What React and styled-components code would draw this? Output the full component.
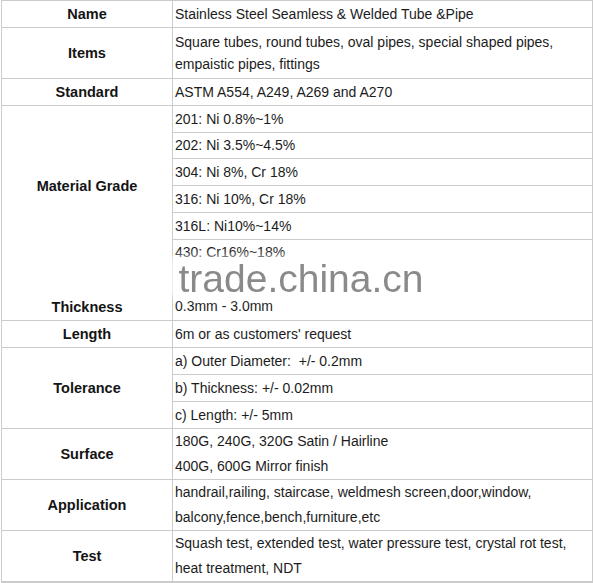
import React from "react";
import styled, { createGlobalStyle } from "styled-components";

const Global = createGlobalStyle`
  html, body { margin: 0; padding: 0; background: #ffffff; }
  body { font-family: "Liberation Sans", Arial, sans-serif; }
`;

const LINE = "#cbcbcb";

const Table = styled.div`
  position: relative;
  box-sizing: border-box;
  width: 592px;
  margin-left: 1px;
  border: 1px solid ${LINE};
  border-top: none;
  background: #fff;
`;

const Row = styled.div`
  display: flex;
  border-bottom: ${(p) => (p.$open ? "none" : `1px solid ${LINE}`)};
  &:first-child { border-top: 1px solid ${LINE}; }
`;

const Label = styled.div`
  box-sizing: border-box;
  flex: 0 0 171px;
  border-right: 1px solid ${LINE};
  display: flex;
  align-items: ${(p) => (p.$pad ? "flex-start" : "center")};
  justify-content: center;
  padding-top: ${(p) => p.$pad || 0}px;
  font-size: 14.5px;
  line-height: 26px;
  font-weight: bold;
  color: #141414;
`;

const Values = styled.div`
  flex: 1;
  display: flex;
  flex-direction: column;
  min-width: 0;
`;

const Cell = styled.div`
  box-sizing: content-box;
  height: ${(p) => p.$h || 26}px;
  padding: ${(p) => p.$pt || 0}px 0 0 2px;
  display: flex;
  flex-direction: column;
  justify-content: ${(p) => (p.$pt ? "flex-start" : "center")};
  font-size: 14px;
  line-height: ${(p) => p.$lh || 25}px;
  color: #1c1c1c;
  white-space: pre;
  & + & { border-top: 1px solid ${LINE}; }
`;

const Watermark = styled.div`
  position: absolute;
  left: 168px;
  top: 253px;
  width: 262px;
  height: 44px;
  display: flex;
  align-items: center;
  justify-content: center;
  pointer-events: none;
`;

const WashBox = styled.div`
  position: absolute;
  inset: 4px 0 0 0;
  background: rgba(255, 255, 255, 0.9);
  filter: blur(4px);
`;

const WashText = styled.span`
  position: relative;
  font-family: "Liberation Sans", Arial, sans-serif;
  font-size: 39px;
  line-height: 1;
  color: rgba(128, 128, 128, 0.92);
  filter: blur(0.6px);
  margin-top: 6px;
`;

const rows = [
  { label: "Name", cells: [{ lines: ["Stainless Steel Seamless & Welded Tube &Pipe"] }] },
  {
    label: "Items",
    cells: [
      {
        lines: ["Square tubes, round tubes, oval pipes, special shaped pipes,", "empaistic pipes, fittings"],
        h: 50,
        lh: 22,
      },
    ],
  },
  { label: "Standard", cells: [{ lines: ["ASTM A554, A249, A269 and A270"] }] },
  {
    label: "Material Grade",
    open: true,
    cells: [
      { lines: ["201: Ni 0.8%~1%"] },
      { lines: ["202: Ni 3.5%~4.5%"], h: 25 },
      { lines: ["304: Ni 8%, Cr 18%"] },
      { lines: ["316: Ni 10%, Cr 18%"] },
      { lines: ["316L: Ni10%~14%"] },
      { lines: ["430: Cr16%~18%"], h: 25 },
    ],
  },
  { label: "Thickness", pad: 29, cells: [{ lines: ["0.3mm - 3.0mm"], h: 26, pt: 29 }] },
  { label: "Length", cells: [{ lines: ["6m or as customers' request"] }] },
  {
    label: "Tolerance",
    cells: [
      { lines: ["a) Outer Diameter:  +/- 0.2mm"] },
      { lines: ["b) Thickness: +/- 0.02mm"] },
      { lines: ["c) Length: +/- 5mm"] },
    ],
  },
  {
    label: "Surface",
    cells: [{ lines: ["180G, 240G, 320G Satin / Hairline", "400G, 600G Mirror finish"], h: 50 }],
  },
  {
    label: "Application",
    cells: [
      {
        lines: ["handrail,railing, staircase, weldmesh screen,door,window,", "balcony,fence,bench,furniture,etc"],
        h: 50,
      },
    ],
  },
  {
    label: "Test",
    cells: [
      {
        lines: ["Squash test, extended test, water pressure test, crystal rot test,", "heat treatment, NDT"],
        h: 50,
      },
    ],
  },
];

export default function App() {
  return (
    <>
      <Global />
      <Table>
        {rows.map((r) => (
          <Row key={r.label} $open={r.open}>
            <Label $pad={r.pad}>{r.label}</Label>
            <Values>
              {r.cells.map((c, i) => (
                <Cell key={i} $h={c.h} $lh={c.lh} $pt={c.pt}>
                  {c.lines.map((t, j) => (
                    <span key={j}>{t}</span>
                  ))}
                </Cell>
              ))}
            </Values>
          </Row>
        ))}
        <Watermark>
          <WashBox />
          <WashText>trade.china.cn</WashText>
        </Watermark>
      </Table>
    </>
  );
}
